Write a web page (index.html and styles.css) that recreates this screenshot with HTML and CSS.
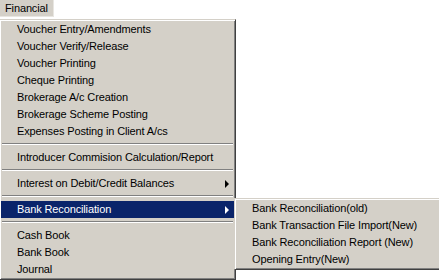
FILE: index.html
```html
<!doctype html>
<html lang="en-US">
  <head>
    <meta charset="utf-8" />
    <title>Financial</title>
    <link rel="stylesheet" href="styles.css">
  </head>
  <body>
    <div class="menubar">
      <div class="bar-item">Financial</div>
    </div>
    <ul class="menu main-menu">
      <li class="item">Voucher Entry/Amendments</li>
      <li class="item">Voucher Verify/Release</li>
      <li class="item">Voucher Printing</li>
      <li class="item">Cheque Printing</li>
      <li class="item">Brokerage A/c Creation</li>
      <li class="item">Brokerage Scheme Posting</li>
      <li class="item">Expenses Posting in Client A/cs</li>
      <li class="sep"></li>
      <li class="item">Introducer Commision Calculation/Report</li>
      <li class="sep"></li>
      <li class="item has-sub">Interest on Debit/Credit Balances<span class="arrow"></span></li>
      <li class="sep"></li>
      <li class="item has-sub active">Bank Reconciliation<span class="arrow"></span>
        <ul class="menu submenu">
          <li class="item">Bank Reconciliation(old)</li>
          <li class="item">Bank Transaction File Import(New)</li>
          <li class="item">Bank Reconciliation Report (New)</li>
          <li class="item">Opening Entry(New)</li>
        </ul>
      </li>
      <li class="sep"></li>
      <li class="item">Cash Book</li>
      <li class="item">Bank Book</li>
      <li class="item">Journal</li>
    </ul>
  </body>
</html>
```

FILE: styles.css
```css
* {
  box-sizing: border-box;
  margin: 0;
  padding: 0;
}

html,
body {
  overflow: hidden;
}

body {
  background: #fff;
  font-family: "Liberation Sans", Arial, sans-serif;
  font-size: 11px;
  letter-spacing: -0.13px;
  color: #000;
}

.menubar {
  display: flex;
  height: 17px;
}

.bar-item {
  background: #d4d0c8;
  padding: 0 5px;
  line-height: 17px;
  border-right: 1px solid #e8e6e1;
  border-bottom: 1px solid #e8e6e1;
}

.menu {
  list-style: none;
  background: #d4d0c8;
  border: 1px solid;
  border-color: #d4d0c8 #404040 #404040 #d4d0c8;
  box-shadow: inset 1px 1px #fff, inset -1px -1px #808080;
  padding: 1px;
}

.main-menu {
  width: 237px;
  margin: 2px 0 0 -1px;
}

.item {
  position: relative;
  height: 17px;
  line-height: 17px;
  padding-left: 16px;
  white-space: nowrap;
}

.sep {
  height: 9px;
  padding-top: 3px;
  margin: 0 1px;
}

.sep::before {
  content: "";
  display: block;
  height: 1px;
  background: #808080;
  border-bottom: 1px solid #fff;
  box-sizing: content-box;
}

.arrow {
  position: absolute;
  right: 5px;
  top: 5px;
  border-left: 4px solid #000;
  border-top: 4px solid transparent;
  border-bottom: 4px solid transparent;
}

.active {
  background: #0a246a;
  color: #fff;
}

.active > .arrow {
  border-left-color: #fff;
}

.submenu {
  position: absolute;
  left: 100%;
  top: -3px;
  width: 215px;
  color: #000;
}

.submenu .item {
  padding-left: 16px;
}
```
